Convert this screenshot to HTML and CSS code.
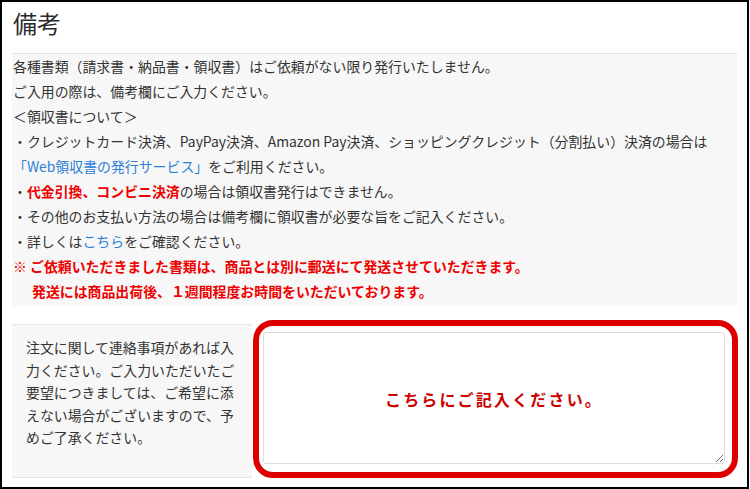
FILE: index.html
```html
<!DOCTYPE html>
<html lang="ja">
<head>
<meta charset="utf-8">
<link rel="stylesheet" href="styles.css">
</head>
<body>
<div class="frame">
  <h2 class="title">備考</h2>
  <div class="info">
    <div class="line">各種書類（請求書・納品書・領収書）はご依頼がない限り発行いたしません。</div>
    <div class="line">ご入用の際は、備考欄にご入力ください。</div>
    <div class="line">＜領収書について＞</div>
    <div class="line">・クレジットカード決済、PayPay決済、Amazon Pay決済、ショッピングクレジット（分割払い）決済の場合は</div>
    <div class="line"><span class="link">「Web領収書の発行サービス」</span>をご利用ください。</div>
    <div class="line">・<span class="red">代金引換、コンビニ決済</span>の場合は領収書発行はできません。</div>
    <div class="line">・その他のお支払い方法の場合は備考欄に領収書が必要な旨をご記入ください。</div>
    <div class="line">・詳しくは<span class="link">こちら</span>をご確認ください。</div>
    <div class="line red">※ ご依頼いただきました書類は、商品とは別に郵送にて発送させていただきます。</div>
    <div class="line red indent">発送には商品出荷後、１週間程度お時間をいただいております。</div>
  </div>
  <div class="row">
    <div class="label">注文に関して連絡事項があれば入<br>力ください。ご入力いただいたご<br>要望につきましては、ご希望に添<br>えない場合がございますので、予<br>めご了承ください。</div>
    <div class="mark">
      <textarea class="memo" placeholder="こちらにご記入ください。"></textarea>
    </div>
  </div>
</div>
</body>
</html>
```
FILE: styles.css
```css
html, body {
  margin: 0;
  padding: 0;
  background: #fff;
}
body {
  font-family: "Noto Sans CJK JP", "Noto Sans", sans-serif;
  color: #333;
}
.frame {
  box-sizing: border-box;
  width: 749px;
  height: 489px;
  border: 2px solid #000;
  padding-left: 10px;
  overflow: hidden;
}
.title {
  margin: 6px 0 15px 1px;
  font-size: 24px;
  line-height: 30px;
  font-weight: normal;
  color: #2b2b2b;
}
.info {
  width: 725px;
  box-sizing: border-box;
  border-top: 1px solid #e4e4e4;
  background: #f7f7f7;
  padding: 0 0 2px 1px;
  font-size: 13.9px;
  line-height: 25px;
}
.line {
  white-space: nowrap;
}
.link {
  color: #2f80d4;
}
.red {
  color: #ee0000;
  font-weight: bold;
}
.indent {
  padding-left: 19px;
}
.row {
  display: flex;
  align-items: flex-start;
  margin-top: 14px;
}
.label {
  box-sizing: border-box;
  width: 240px;
  height: 154px;
  margin-top: 4px;
  border-top: 1px solid #e6e6e6;
  border-bottom: 1px solid #e6e6e6;
  background: #f7f7f7;
  padding: 11px 0 0 14px;
  font-size: 13.9px;
  line-height: 22.5px;
  white-space: nowrap;
}
.mark {
  box-sizing: border-box;
  width: 485px;
  height: 158px;
  margin-left: 1px;
  border: 6px solid #dd0000;
  border-radius: 20px;
  padding: 6px 7px 8px 4px;
  background: #fff;
}
.memo {
  display: block;
  box-sizing: border-box;
  width: 462px;
  height: 132px;
  margin: 0;
  border: 1px solid #dcdcdc;
  border-radius: 3px;
  padding: 54px 8px 0;
  font-family: "Noto Sans CJK JP", sans-serif;
  font-size: 16px;
  line-height: 24px;
  text-align: center;
  background: #fff;
  outline: none;
}
.memo::placeholder {
  color: #cc0000;
  font-weight: bold;
  letter-spacing: 2.2px;
  opacity: 1;
}
```
